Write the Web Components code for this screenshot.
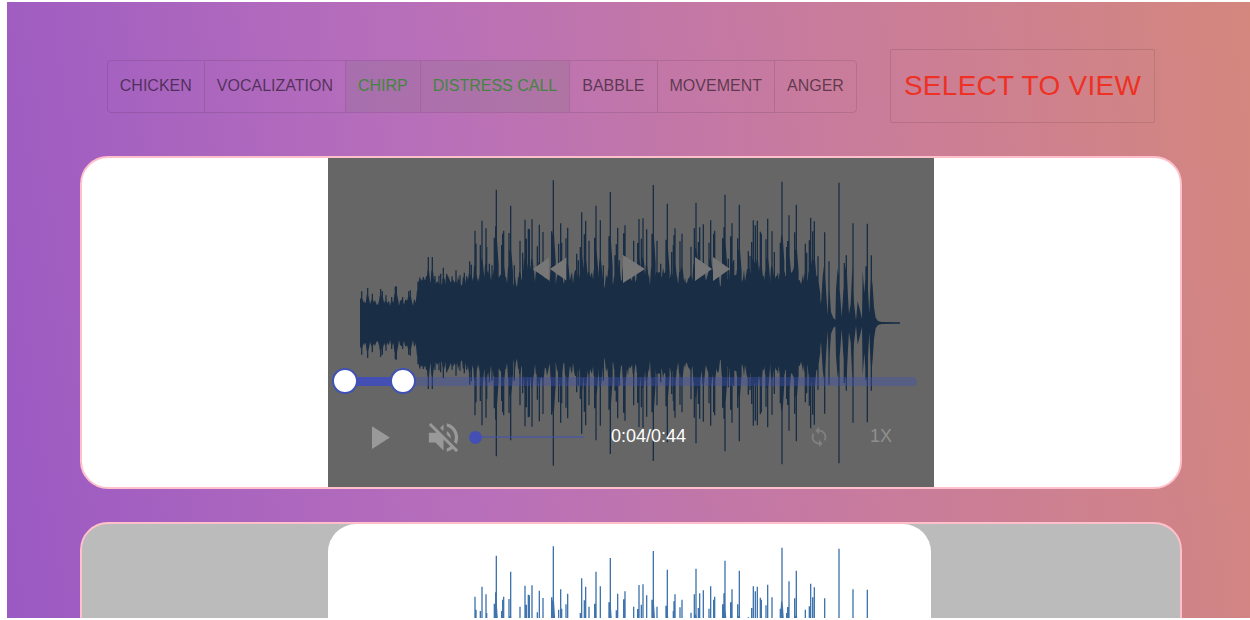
<!DOCTYPE html>
<html lang="en">
<head>
<meta charset="utf-8">
<meta name="viewport" content="width=device-width, initial-scale=1">
<title>Audio labels</title>
<style>
  body { margin: 0; background: #fff; font-family: "Liberation Sans", Arial, sans-serif; }
</style>
</head>
<body>
<label-page>
  <tag-group slot="tags">
    <tag-button>CHICKEN</tag-button>
    <tag-button>VOCALIZATION</tag-button>
    <tag-button selected>CHIRP</tag-button>
    <tag-button selected>DISTRESS CALL</tag-button>
    <tag-button>BABBLE</tag-button>
    <tag-button>MOVEMENT</tag-button>
    <tag-button>ANGER</tag-button>
  </tag-group>
  <view-button slot="tags">SELECT TO VIEW</view-button>
  <media-card><clip-player></clip-player></media-card>
  <media-card muted><clip-preview></clip-preview></media-card>
</label-page>

<script>
function define(name, html, setup) {
  const template = document.createElement('template');
  template.innerHTML = html;
  customElements.define(name, class extends HTMLElement {
    constructor() {
      super();
      this.attachShadow({ mode: 'open' }).append(template.content.cloneNode(true));
    }
    connectedCallback() { if (setup) setup(this, this.shadowRoot); }
  });
}

define('label-page', `
  <style>
    :host { display: block; height: calc(100vh - 4px); margin: 2px 0 2px 7px; overflow: hidden; }
    main {
      box-sizing: border-box; min-height: 100%; padding: 47px 68px 33px 73px;
      display: flex; flex-direction: column; gap: 33px;
      background: linear-gradient(82deg, #9858c4 0%, #b86fba 38%, #c97c9b 69%, #d4877d 100%);
    }
    header { display: flex; justify-content: center; align-items: center; gap: 33px; }
  </style>
  <main>
    <header><slot name="tags"></slot></header>
    <slot></slot>
  </main>`);

define('tag-group', `
  <style>
    :host { display: flex; border: 1px solid rgba(0,0,0,.1); border-radius: 4px; overflow: hidden; }
    ::slotted(:not(:first-child)) { border-left: 1px solid rgba(0,0,0,.1); }
  </style>
  <slot></slot>`);

define('tag-button', `
  <style>
    :host { display: block; }
    button {
      display: block; margin: 0; border: 0; padding: 0 12px; height: 51px;
      background: transparent; color: rgba(0,0,0,.54);
      font: 16px "Liberation Sans", Arial, sans-serif; white-space: nowrap; cursor: pointer;
    }
    :host([selected]) button { background: rgba(118,118,118,.2); color: #43853f; }
  </style>
  <button type="button"><slot></slot></button>`, (host, root) => {
    const button = root.querySelector('button');
    button.setAttribute('aria-pressed', host.hasAttribute('selected'));
    button.onclick = () => button.setAttribute('aria-pressed', host.toggleAttribute('selected'));
  });

define('view-button', `
  <style>
    :host { display: block; }
    button {
      display: block; margin: 0; padding: 0 13px; height: 74px;
      border: 1px solid rgba(0,0,0,.1); border-radius: 2px;
      background: transparent; color: #ee3124; letter-spacing: 0.01em;
      font: 28px "Liberation Sans", Arial, sans-serif; white-space: nowrap; cursor: pointer;
    }
  </style>
  <button type="button"><slot></slot></button>`);

define('media-card', `
  <style>
    :host {
      display: grid; grid-template-columns: minmax(0, 606px); justify-content: center;
      border: 2px solid pink; border-radius: 28px; background: #fff; overflow: hidden;
    }
    :host([muted]) { background: #bbb; }
  </style>
  <slot></slot>`);

/* Peaks as x, amplitude pairs, in units of a third of a pixel. */
const PEAKS = `2 73 5 95 23 105 37 88 62 102 67 95 78 83 95 78 106 109 109 110 128 78 146 95 151 98
174 124 186 130 190 138 196 130 205 198 217 198 225 141 237 142 242 148 250 166 260 148 276 140 288 158 300 143 313 151 320 140 329 185 334 175
345 277 348 238 361 234 366 307 378 284 380 228 388 178 396 173 403 256 407 290 409 400 425 234 428 268 431 277 447 270 452 352 463 173
480 247 488 211 495 310 499 253 505 283 508 281 516 311 532 230 538 295 549 273 575 275 580 428 596 238 602 299 605 241 618 254 623 286
650 208 655 188 661 228 665 332 673 266 677 307 687 247 704 256 708 352 721 308 730 173 747 260 751 393 765 203 769 236 773 286 778 188 791 269 795 293
821 247 833 240 837 312 844 253 849 314 860 281 876 268 880 414 891 247 902 178 918 250 922 358 935 213 940 234 942 263 945 284 960 245 966 268
993 229 1003 284 1008 361 1015 243 1019 287 1030 296 1047 241 1052 308 1061 268 1064 277 1088 254 1092 287 1095 385 1105 193 1112 260 1116 299 1121 188
1133 254 1138 355 1165 215 1170 201 1175 243 1180 308 1186 293 1192 307 1201 274 1204 268 1218 251 1223 313 1236 275 1243 213 1261 241 1266 424
1280 228 1283 246 1287 323 1304 272 1309 355 1336 238 1340 211 1348 248 1352 316 1358 275 1363 305 1374 200
1394 272 1407 185 1437 421 1453 180 1459 203 1479 299 1518 170 1522 298 1534 203`.split(/\s+/).map(Number);

/* Outline of the fading end of the clip. */
const TAIL = [1375,125,1383,57,1388,140,1394,188,1398,100,1403,23,1407,150,1410,78,1413,33,1420,15,1426,10,
  1428,100,1433,165,1440,90,1445,18,1450,95,1456,170,1461,145,1464,78,1467,28,1472,58,1478,190,1482,60,1488,8,
  1493,65,1500,38,1506,12,1508,158,1513,90,1518,165,1524,100,1528,28,1533,160,1538,110,1542,48,1547,16,1554,6,1565,3,1620,2];

function wavePath() {
  let seed = 11;
  const random = () => (seed = (seed * 16807) % 2147483647) / 2147483647;
  const top = [];
  for (let x = 0; x < 1374; x += 3) {
    const base = x < 174 ? 52 + random() * 20
      : x < 345 ? 108 + random() * 34
      : 112 + random() * 44 + 12 * Math.sin(x / 20);
    top.push([x, base]);
  }
  for (let i = 0; i < TAIL.length; i += 2) top.push([TAIL[i], TAIL[i + 1]]);
  let d = 'M' + top.map(p => p[0] + ' ' + (450 - p[1]).toFixed(0)).join('L')
        + 'L' + top.reverse().map(p => p[0] + ' ' + (450 + p[1]).toFixed(0)).join('L') + 'Z';
  for (let i = 0; i < PEAKS.length; i += 2) {
    const x = PEAKS[i], a = PEAKS[i + 1], s = a * (x < 345 ? .8 : .62);
    d += `M${x - 2} ${450 - a}h4V${450 + a}h-4Z`;
    if (x < 1380) d += `M${x - 6} ${450 - s * .7}L${x - 3} ${450 - s}h5L${x + 7} ${450 - s * .7}V${450 + s * .7}L${x + 2} ${450 + s}h-5L${x - 6} ${450 + s * .7}Z`;
  }
  return d;
}

define('wave-form', `
  <style>
    :host { display: block; padding: 15px 34px 14px 32px; }
    svg { display: block; width: 100%; height: 300px; }
    path { fill: #3f74ad; fill-rule: nonzero; }
  </style>
  <svg viewBox="0 0 1620 900" preserveAspectRatio="none" role="img" aria-label="Waveform"><path/></svg>`,
  (host, root) => root.querySelector('path').setAttribute('d', wavePath()));

const ICONS = {
  rewind: 'M11 18V6l-8.5 6 8.5 6zm.5-6l8.5 6V6l-8.5 6z',
  play: 'M8 5v14l11-7z',
  forward: 'M4 18l8.5-6L4 6v12zm9-12v12l8.5-6L13 6z',
  mute: 'M16.5 12c0-1.77-1.02-3.29-2.5-4.03v2.21l2.45 2.45c.03-.2.05-.41.05-.63zm2.5 0c0 .94-.2 1.82-.54 2.64l1.51 1.51C20.63 14.91 21 13.5 21 12c0-4.28-2.99-7.86-7-8.77v2.06c2.89.86 5 3.54 5 6.71zM4.27 3L3 4.27 7.73 9H3v6h4l5 5v-6.73l4.25 4.25c-.67.52-1.42.93-2.25 1.18v2.06c1.38-.31 2.63-.95 3.69-1.81L19.73 21 21 19.73l-9-9L4.27 3zM12 4L9.91 6.09 12 8.18V4z',
  loop: 'M12 4V1L8 5l4 4V6c3.31 0 6 2.69 6 6 0 1.01-.25 1.97-.7 2.8l1.46 1.46C19.54 15.03 20 13.57 20 12c0-4.42-3.58-8-8-8zm0 14c-3.31 0-6-2.69-6-6 0-1.01.25-1.97.7-2.8L5.24 7.74C4.46 8.97 4 10.43 4 12c0 4.42 3.58 8 8 8v3l4-4-4-4v3z'
};

define('icon-button', `
  <style>
    :host { display: block; width: 48px; height: 48px; color: #777; }
    button {
      width: 100%; height: 100%; margin: 0; border: 0; padding: 0; background: none; color: inherit;
      display: flex; align-items: center; justify-content: center; cursor: pointer;
    }
    svg { display: block; fill: currentColor; flex: none; }
  </style>
  <button type="button"><svg viewBox="0 0 24 24" aria-hidden="true"><path/></svg></button>`,
  (host, root) => {
    const svg = root.querySelector('svg');
    svg.setAttribute('width', host.getAttribute('size'));
    svg.setAttribute('height', host.getAttribute('size'));
    root.querySelector('path').setAttribute('d', ICONS[host.getAttribute('icon')]);
    root.querySelector('button').setAttribute('aria-label', host.getAttribute('label'));
  });

define('clip-range', `
  <style>
    :host { display: block; position: relative; height: 26px; }
    .rail, .span { position: absolute; top: 9px; height: 9px; }
    .rail { left: 13px; right: 13px; border-radius: 5px; background: #3f51b5; opacity: .38; }
    .span { left: 13px; width: 10%; background: #434fb3; }
    input {
      position: absolute; inset: 0; width: 100%; height: 26px; margin: 0;
      appearance: none; background: none; pointer-events: none;
    }
    input::-webkit-slider-runnable-track { height: 26px; background: none; }
    input::-webkit-slider-thumb {
      appearance: none; box-sizing: border-box; width: 26px; height: 26px; border-radius: 50%;
      background: #fff; border: 2px solid #3f51b5; pointer-events: auto;
    }
  </style>
  <div class="rail"></div><div class="span"></div>
  <input type="range" aria-label="Clip start" min="0" max="1000" value="0">
  <input type="range" aria-label="Clip end" min="0" max="1000" value="101">`);

define('volume-range', `
  <style>
    :host { display: block; width: 122px; height: 14px; }
    input {
      display: block; width: 100%; height: 14px; margin: 0; appearance: none;
      background: linear-gradient(rgba(63,81,181,.5), rgba(63,81,181,.5)) center / calc(100% - 14px) 2px no-repeat;
    }
    input::-webkit-slider-thumb { appearance: none; width: 13px; height: 13px; border-radius: 50%; background: #434fb3; }
  </style>
  <input type="range" aria-label="Volume" min="0" max="100" value="0">`);

define('clip-player', `
  <style>
    :host { display: block; position: relative; }
    .overlay {
      position: absolute; inset: 0; box-sizing: border-box; padding: 87px 0 26px;
      display: flex; flex-direction: column; justify-content: space-between;
      background: rgba(0,0,0,.6); color: #fff; font-size: 18px;
    }
    .transport { display: flex; justify-content: center; gap: 32px; }
    clip-range { margin: 56px 4px 0; }
    .bar { display: flex; align-items: center; padding: 0 29px 0 26px; }
    .bar icon-button { color: #999; }
    .mute { margin: 0 2px 0 17px; }
    time { margin: 0 auto 0 20px; padding-bottom: 2px; line-height: 24px; }
    .bar .loop { margin-right: 14px; color: #808080; }
    .speed {
      width: 48px; height: 48px; margin: 0; border: 0; padding: 0 0 2px; background: none; color: #8f8f8f;
      font: 18px "Liberation Sans", Arial, sans-serif; cursor: pointer;
    }
  </style>
  <wave-form></wave-form>
  <div class="overlay">
    <div class="transport">
      <icon-button icon="rewind" size="46" label="Rewind"></icon-button>
      <icon-button icon="play" size="48" label="Play"></icon-button>
      <icon-button icon="forward" size="48" label="Fast forward"></icon-button>
    </div>
    <clip-range></clip-range>
    <div class="bar">
      <icon-button icon="play" size="39" label="Play"></icon-button>
      <icon-button class="mute" icon="mute" size="39" label="Unmute"></icon-button>
      <volume-range></volume-range>
      <time>0:04/0:44</time>
      <icon-button class="loop" icon="loop" size="22" label="Loop"></icon-button>
      <button class="speed" type="button">1X</button>
    </div>
  </div>`);

define('clip-preview', `
  <style>
    :host { display: block; margin-right: 3px; border-radius: 28px; background: #fff; }
    wave-form { margin-right: -3px; }
  </style>
  <wave-form></wave-form>`);
</script>
</body>
</html>
